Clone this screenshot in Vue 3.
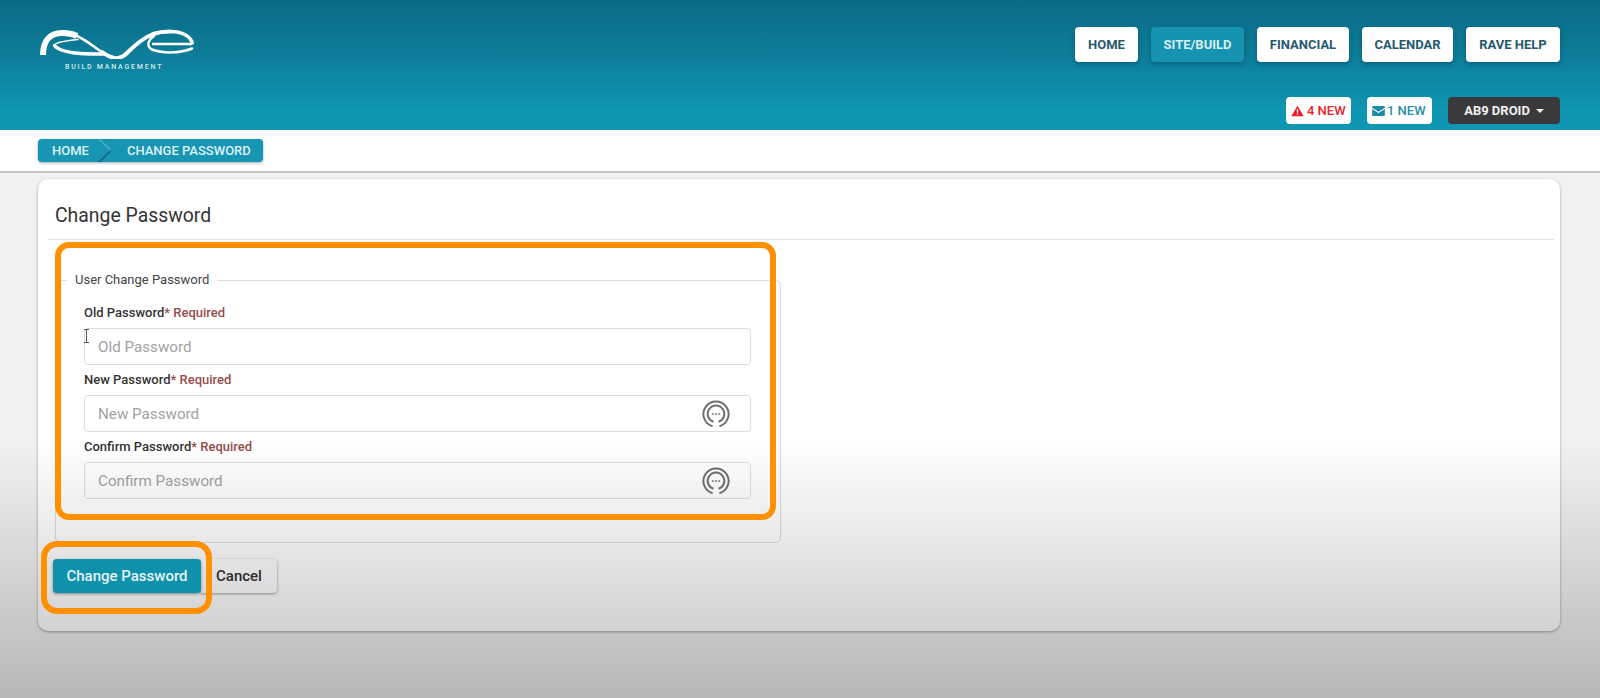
<script setup>
const navItems = [
  { label: "HOME", width: 63 },
  { label: "SITE/BUILD", width: 93, active: true },
  { label: "FINANCIAL", width: 92 },
  { label: "CALENDAR", width: 91 },
  { label: "RAVE HELP", width: 94 }
];

const fields = [
  { label: "Old Password", placeholder: "Old Password" },
  { label: "New Password", placeholder: "New Password", icon: true },
  { label: "Confirm Password", placeholder: "Confirm Password", icon: true }
];
</script>

<template>
  <div class="page">
    <header class="top">
      <div class="brand">
        <svg class="logo" viewBox="36 24 156 32" width="156" height="32" aria-hidden="true">
          <g fill="none" stroke="#fff" stroke-linecap="round">
            <path stroke-width="6" stroke-linecap="butt" d="M41 52C41 37 49 30 60 30C66 30 71 31 75 33" />
            <path stroke-width="2.500" d="M75 33C84 37 92 44 100 49" />
            <path stroke-width="4" d="M100 49C104 52 108 54 112 55C117 56 121 54 125 50C132 43 141 35 151 31C157 29 162 28.500 168 28.500" />
            <path stroke-width="1.500" d="M76 36.500C66 37.500 54 39 52.500 42" />
            <path stroke-width="3.500" d="M52.500 42.500C56 47 66 49.500 78 50.500C86 51 94 51 102 51" />
            <path stroke-width="3.500" stroke-linecap="butt" d="M168 28.500C180 28.500 189 33 190.500 41" />
            <path stroke-width="2.500" stroke-linecap="butt" d="M190.500 41H150" />
            <path stroke-width="2.500" d="M152 33C146 37 144 43 150 46.500C160 50.500 178 50.500 190 45.500" />
          </g>
        </svg>
        <div class="brand-sub">BUILD MANAGEMENT</div>
      </div>
      <div class="top-right">
        <nav class="nav">
          <a
            v-for="item in navItems"
            :key="item.label"
            class="nav-btn"
            :class="{ active: item.active }"
            :style="{ width: item.width + 'px' }"
          >{{ item.label }}</a>
        </nav>
        <div class="status">
          <span class="pill pill-red">
            <svg viewBox="0 0 16 14" width="13" height="12" aria-hidden="true">
              <path fill="#ee1c25" d="M8 0.5L15.6 13.5H0.4Z" />
              <rect x="7.200" y="4.600" width="1.600" height="4.600" fill="#fff" />
              <rect x="7.200" y="10" width="1.600" height="1.700" fill="#fff" />
            </svg>
            4 NEW
          </span>
          <span class="pill pill-teal">
            <svg viewBox="0 0 14 11" width="13" height="10" aria-hidden="true">
              <path fill="#1c8ba6" d="M0 1.200C0 .5 .5 0 1.200 0H12.800C13.500 0 14 .5 14 1.200V1.800L7 6.200L0 1.800ZM0 3.400L7 7.800L14 3.400V9.800C14 10.500 13.500 11 12.800 11H1.200C.5 11 0 10.500 0 9.800Z" />
            </svg>
            1 NEW
          </span>
          <span class="user">AB9 DROID<i class="caret"></i></span>
        </div>
      </div>
    </header>

    <div class="crumb-bar">
      <div class="crumbs">
        <span class="crumb-home">HOME</span>
        <svg class="crumb-sep" viewBox="0 0 14 23" width="14" height="23" aria-hidden="true">
          <path d="M1 0L13 11.500" stroke="#57b4ca" stroke-width="1.200" fill="none" />
          <path d="M13 11.500L1 23" stroke="#0d6580" stroke-width="1.600" fill="none" />
        </svg>
        <span class="crumb-current">CHANGE PASSWORD</span>
      </div>
    </div>

    <main class="content">
      <section class="card">
        <h1 class="card-title">Change Password</h1>
        <div class="card-body">
          <fieldset class="group">
            <legend>User Change Password</legend>
            <div v-for="field in fields" :key="field.label" class="field">
              <label>{{ field.label }}<span class="req">* Required</span></label>
              <div class="input-box">
                <input type="text" :placeholder="field.placeholder" />
                <svg v-if="field.icon" class="pw-icon" viewBox="0 0 28 28" width="28" height="28" aria-hidden="true">
                  <g fill="none" stroke="#6f6f6f" stroke-width="2">
                    <path d="M10.600 26.200A12.600 12.600 0 1 1 17.400 26.200" />
                    <path d="M11.400 21.800A8.300 8.300 0 1 1 16.600 21.800" />
                  </g>
                  <g fill="#8a8a8a">
                    <circle cx="10.800" cy="14" r="1.100" />
                    <circle cx="14" cy="14" r="1.100" />
                    <circle cx="17.200" cy="14" r="1.100" />
                  </g>
                </svg>
              </div>
            </div>
          </fieldset>
          <div class="actions">
            <button type="button" class="btn btn-primary">Change Password</button>
            <button type="button" class="btn btn-cancel">Cancel</button>
          </div>
        </div>
      </section>
    </main>

    <div class="shade"></div>
    <svg class="ibeam" viewBox="0 0 7 14" width="7" height="14" aria-hidden="true">
      <path d="M1 .5H6M3.500 .5V13.500M1 13.500H6" stroke="#555" stroke-width="1" fill="none" />
    </svg>
    <div class="mark mark-form"></div>
    <div class="mark mark-btn"></div>
  </div>
</template>

<style scoped>
.page {
  position: relative;
  height: 698px;
  overflow: hidden;
  background: #f1f1f1;
  font-family: Roboto, "Liberation Sans", sans-serif;
  color: #333;
}

.top {
  height: 130px;
  box-sizing: border-box;
  display: flex;
  justify-content: space-between;
  padding: 27px 40px 0 38px;
  background: linear-gradient(180deg, #0a6a85 0%, #0d7f9b 45%, #0e96b2 85%, #0e96b2 100%);
}

.logo {
  display: block;
}

.brand-sub {
  margin: 4px 0 0 27px;
  font-size: 7px;
  line-height: 8px;
  font-weight: 500;
  letter-spacing: 1.8px;
  color: #d6ecf1;
}

.top-right {
  display: flex;
  flex-direction: column;
  align-items: flex-end;
  gap: 35px;
}

.nav {
  display: flex;
  gap: 13px;
}

.nav-btn {
  height: 35px;
  display: flex;
  align-items: center;
  justify-content: center;
  border-radius: 4px;
  background: #fff;
  color: #26596d;
  font-size: 13px;
  font-weight: 700;
  box-shadow: 0 2px 5px rgba(0, 40, 60, 0.35);
}

.nav-btn.active {
  background: #1593b0;
  color: #d9f0f5;
}

.status {
  display: flex;
  align-items: center;
  gap: 16px;
  height: 27px;
}

.pill {
  width: 65px;
  height: 27px;
  box-sizing: border-box;
  display: flex;
  align-items: center;
  border-radius: 4px;
  background: #fff;
  font-size: 13px;
  font-weight: 500;
}

.pill-red {
  gap: 3px;
  padding-left: 5px;
  color: #e8232b;
}

.pill-teal {
  gap: 2px;
  padding-left: 5px;
  color: #2a90a8;
}

.user {
  width: 112px;
  height: 27px;
  display: flex;
  align-items: center;
  justify-content: center;
  gap: 6px;
  border-radius: 4px;
  background: #3a3a3c;
  color: #f1f1f1;
  font-size: 13px;
  font-weight: 700;
}

.caret {
  width: 0;
  height: 0;
  border-left: 4.500px solid transparent;
  border-right: 4.500px solid transparent;
  border-top: 4.500px solid #eee;
}

.crumb-bar {
  height: 43px;
  box-sizing: border-box;
  padding: 9px 0 0 38px;
  background: #fff;
  border-bottom: 2px solid #c4c4c4;
}

.crumbs {
  width: 225px;
  height: 23px;
  box-sizing: border-box;
  padding-bottom: 1px;
  display: flex;
  align-items: center;
  border-radius: 4px;
  background: #1795b3;
  color: #dff1f5;
  font-size: 13px;
  font-weight: 500;
  box-shadow: 0 1px 3px rgba(0, 50, 70, 0.4);
}

.crumb-home {
  margin-left: 14px;
}

.crumb-sep {
  margin-left: 9px;
}

.crumb-current {
  margin-left: 15px;
}

.content {
  padding: 6px 40px 0 38px;
}

.card {
  height: 452px;
  border-radius: 10px;
  background: #fff;
  box-shadow: 0 1px 3px rgba(0, 0, 0, 0.35);
}

.card-title {
  height: 61px;
  box-sizing: border-box;
  margin: 0 6px 0 10px;
  padding: 24px 0 0 7px;
  border-bottom: 1px solid #e4e4e4;
  font-size: 19.400px;
  line-height: 26px;
  font-weight: 400;
  color: #333;
}

.card-body {
  padding: 32px 0 0 17px;
}

.group {
  width: 726px;
  height: 271px;
  box-sizing: border-box;
  margin: 0;
  padding: 0 29px 0 28px;
  border: 1px solid #ddd;
  border-radius: 5px;
}

.group legend {
  margin-left: -17px;
  padding: 0 8px;
  font-size: 13px;
  line-height: 16px;
  color: #444;
}

.field {
  padding-top: 7px;
}

.field:first-of-type {
  padding-top: 17px;
}

.field label {
  display: block;
  height: 23px;
  font-size: 13px;
  line-height: 16px;
  font-weight: 500;
  color: #333;
}

.req {
  color: #964c4c;
}

.input-box {
  height: 37px;
  display: flex;
  align-items: center;
  box-sizing: border-box;
  padding-right: 20px;
  border: 1px solid #ddd;
  border-radius: 4px;
  background: #fff;
}

.input-box input {
  flex: 1;
  min-width: 0;
  height: 100%;
  box-sizing: border-box;
  padding: 0 13px;
  border: 0;
  outline: 0;
  background: transparent;
  font-family: inherit;
  font-size: 15.200px;
}

.input-box input::placeholder {
  color: #a2a2a2;
  opacity: 1;
}

.pw-icon {
  flex: none;
}

.actions {
  display: flex;
  align-items: center;
  margin: 16px 0 0 -2px;
}

.btn {
  height: 34px;
  border: 0;
  font-family: inherit;
  font-size: 15px;
  font-weight: 500;
}

.btn-primary {
  position: relative;
  z-index: 1;
  width: 148px;
  border-radius: 4px;
  background: #0f90ab;
  color: #e6f3f6;
  box-shadow: 0 1px 3px rgba(0, 0, 0, 0.4);
}

.btn-cancel {
  width: 76px;
  border-radius: 0 4px 4px 0;
  background: #fff;
  color: #333;
  box-shadow: 0 1px 3px rgba(0, 0, 0, 0.4);
}

.shade {
  position: absolute;
  inset: 0;
  pointer-events: none;
  background: linear-gradient(180deg, rgba(0, 0, 0, 0) 440px, rgba(0, 0, 0, 0.24) 698px);
}

.ibeam {
  position: absolute;
  left: 83px;
  top: 329px;
}

.mark {
  position: absolute;
  box-sizing: border-box;
  border: 6px solid #ff9100;
  pointer-events: none;
}

.mark-form {
  left: 55px;
  top: 242px;
  width: 721px;
  height: 278px;
  border-radius: 14px;
}

.mark-btn {
  left: 41px;
  top: 541px;
  width: 171px;
  height: 73px;
  border-radius: 16px;
}
</style>

<style>
html,
body {
  margin: 0;
}
</style>
